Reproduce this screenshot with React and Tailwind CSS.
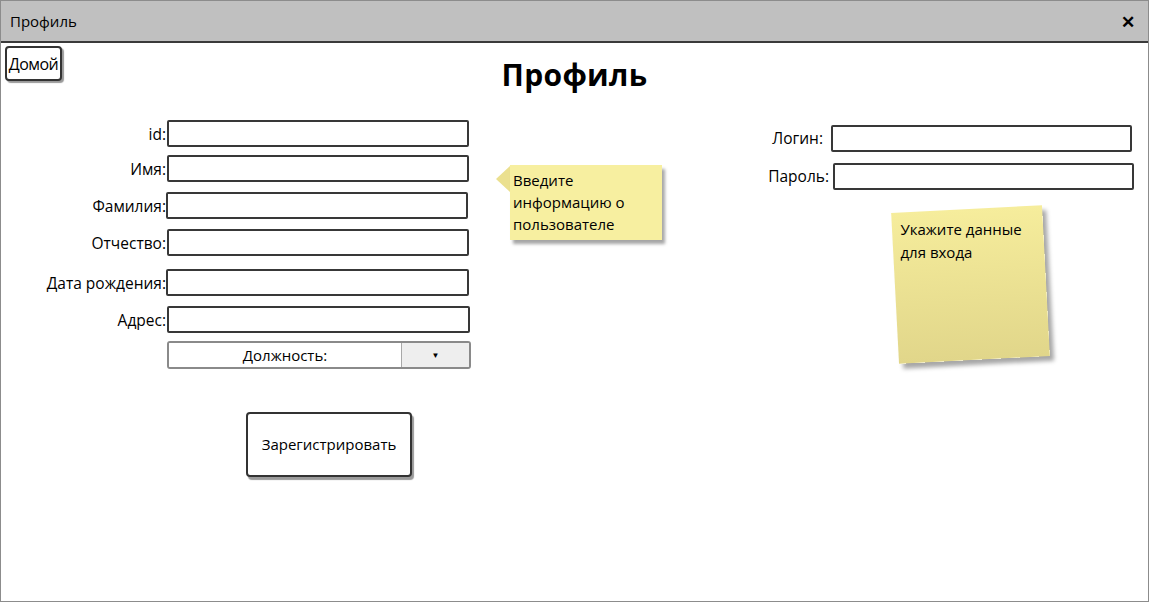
import React from 'react'

const font = { fontFamily: '"Open Sans", "Noto Sans", sans-serif' }

const Field = ({ label, mt, shift = '' }) => (
    <div className={`flex items-center ${mt}`}>
        <span className="w-[166px] pr-[1px] text-right text-[15.5px] leading-[20px] text-black">{label}</span>
        <div className={`w-[302px] h-[27px] border-2 border-[#383838] rounded-[2px] bg-white ${shift}`} />
    </div>
)

const App = () => {
    return (
        <div className="w-[1150px] h-[603px] bg-white" style={font}>
            <div className="w-[1149px] h-[602px] border border-[#8c8c8c] flex flex-col">
                {/* Title bar */}
                <div className="h-[42px] shrink-0 bg-[#c0c0c0] border-b-2 border-[#3a3a3a] flex items-center justify-between pl-[9px] pr-[13px]">
                    <span className="text-[15px] text-black">Профиль</span>
                    <span className="text-[17px] font-bold text-black leading-none">✕</span>
                </div>

                {/* Header row */}
                <div className="h-[70px] shrink-0 grid grid-cols-[1fr_auto_1fr]">
                    <div>
                        <button className="mt-[3px] ml-[4px] w-[57px] h-[35px] border-2 border-[#333] rounded-[4px] bg-white shadow-[2px_2px_1px_#9a9a9a] text-[16px] leading-none text-black flex items-center justify-center tracking-[-0.5px]">
                            Домой
                        </button>
                    </div>
                    <h1 className="mt-[14px] text-[30px] leading-[36px] font-bold text-black tracking-[0.3px]">Профиль</h1>
                    <div />
                </div>

                {/* Content */}
                <div className="flex items-start">
                    {/* Left form */}
                    <div className="w-[471px] flex flex-col">
                        <Field label="id:" mt="mt-[7px]" />
                        <Field label="Имя:" mt="mt-[8px]" />
                        <Field label="Фамилия:" mt="mt-[10px]" shift="-ml-[1px]" />
                        <Field label="Отчество:" mt="mt-[10px]" />
                        <Field label="Дата рождения:" mt="mt-[13px]" shift="-ml-[1px] w-[303px]" />
                        <Field label="Адрес:" mt="mt-[10px]" shift="w-[303px]" />
                        <div className="mt-[8px] ml-[166px] w-[304px] h-[28px] border-2 border-[#8a8a8a] rounded-[3px] flex overflow-hidden">
                            <div className="flex-1 flex items-center justify-center text-[15px] text-black bg-white">Должность:</div>
                            <div className="w-[68px] bg-[#eeeeee] border-l border-[#a8a8a8] flex items-center justify-center text-[8px] text-black">▼</div>
                        </div>
                        <button className="mt-[43px] ml-[245px] w-[166px] h-[65px] border-2 border-[#333] rounded-[4px] bg-white shadow-[2px_3px_1px_#9a9a9a] text-[15px] text-black">
                            Зарегистрировать
                        </button>
                    </div>

                    {/* Callout */}
                    <div className="ml-[24px] mt-[52px] flex items-start">
                        <div className="mt-[1px] w-0 h-0 border-y-[13px] border-y-transparent border-r-[14px] border-r-[#ebe08f]" />
                        <div className="w-[152px] h-[75px] bg-[#f7efa0] shadow-[3px_4px_3px_rgba(0,0,0,0.35)] pl-[3px] pt-[4px] text-[15px] leading-[22px] text-black">
                            Введите<br />информацию о<br />пользователе
                        </div>
                    </div>

                    {/* Right form */}
                    <div className="ml-auto mr-[14px] w-[373px] flex flex-col">
                        <div className="mt-[12px] flex items-center justify-end pr-[2px]">
                            <span className="text-[15.5px] text-black">Логин:</span>
                            <div className="ml-[8px] w-[301px] h-[27px] border-2 border-[#383838] rounded-[2px]" />
                        </div>
                        <div className="mt-[11px] flex items-center justify-end">
                            <span className="text-[15.5px] text-black">Пароль:</span>
                            <div className="ml-[4px] w-[301px] h-[27px] border-2 border-[#383838] rounded-[2px]" />
                        </div>
                        <div className="mt-[19px] ml-[134px] w-[151px] h-[151px] -rotate-3 bg-gradient-to-b from-[#f6ed9c] to-[#e1d68a] shadow-[4px_5px_4px_rgba(0,0,0,0.35)]">
                            <div className="rotate-3 pl-[8px] pt-[9px] text-[15px] leading-[23px] text-black">
                                Укажите данные<br />для входа
                            </div>
                        </div>
                    </div>
                </div>
            </div>
        </div>
    )
}

export default App
